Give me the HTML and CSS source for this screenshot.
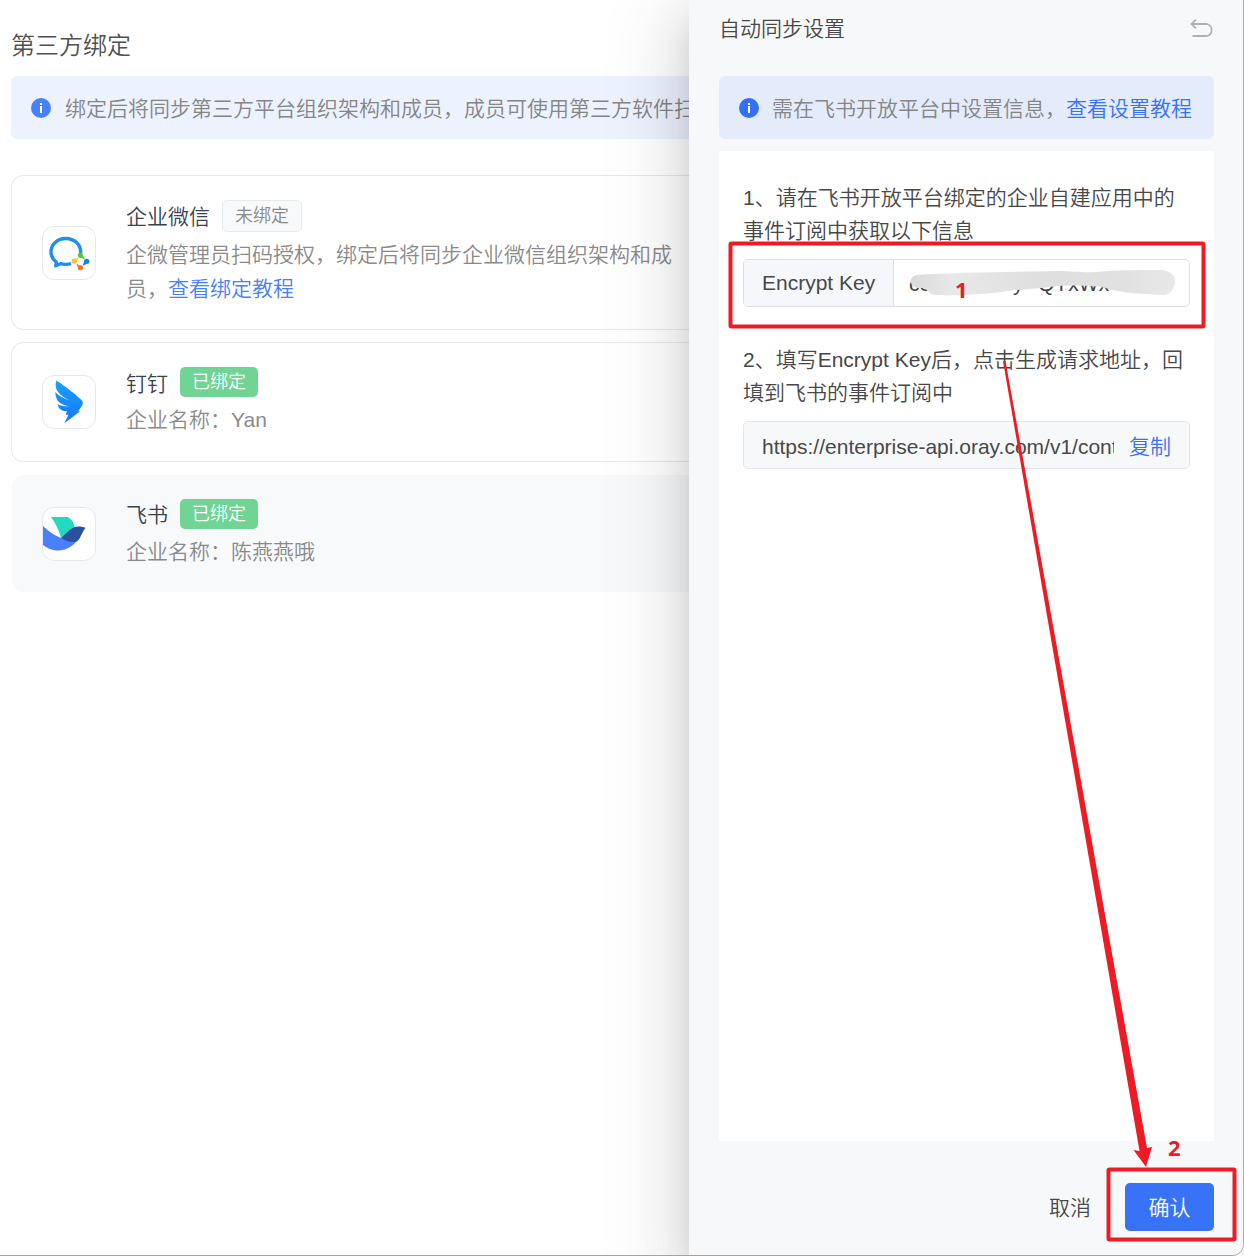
FILE: index.html
```html
<!DOCTYPE html>
<html lang="zh-CN">
<head>
<meta charset="utf-8">
<title>第三方绑定</title>
<link rel="stylesheet" href="styles.css">
</head>
<body>
<div class="app">
  <main class="main">
    <h1 class="page-title">第三方绑定</h1>
    <div class="notice notice-main">
      <svg class="info" viewBox="0 0 20 20"><circle cx="10" cy="10" r="10"/><path d="M9 5h2v2H9zM9 8h2v7H9z"/></svg>
      <span>绑定后将同步第三方平台组织架构和成员，成员可使用第三方软件扫</span>
    </div>
    <section class="card card-wecom">
      <div class="logo">
        <svg viewBox="0 0 54 54">
          <path d="M38.700 26C39 17.500 32.200 11.500 24 11.500C15 11.500 9 17.500 9 25C9 29.500 11 32.500 14.300 35L13.800 38.800L18.500 36.700C22 37.600 25.500 37.600 29 36.700" fill="none" stroke="#1e8ff2" stroke-width="3.400" stroke-linejoin="round"/>
          <g>
            <circle cx="38.300" cy="28.300" r="2.500" fill="#4fca37"/><path d="M39.800 26.300L43 32.400L36.600 30.100Z" fill="#4fca37"/>
            <circle cx="32" cy="34.300" r="2.500" fill="#ffc81e"/><path d="M30 32.800L36.500 30.600L33.800 36.300Z" fill="#ffc81e"/>
            <circle cx="38.500" cy="40.800" r="2.500" fill="#ff6d22"/><path d="M34.300 36.800L40.700 39.600L36.700 42.500Z" fill="#ff6d22"/>
            <circle cx="44.800" cy="34.300" r="2.500" fill="#0c82f0"/><path d="M43.200 32.300L40.400 38.700L46.300 36.300Z" fill="#0c82f0"/>
          </g>
        </svg>
      </div>
      <div class="info-text">
        <div class="name-row"><span class="name">企业微信</span><span class="tag tag-off">未绑定</span></div>
        <p class="desc">企微管理员扫码授权，绑定后将同步企业微信组织架构和成<br>员，<a class="link">查看绑定教程</a></p>
      </div>
    </section>
    <section class="card card-ding">
      <div class="logo">
        <svg viewBox="0 0 54 54">
          <defs><linearGradient id="wing" x1="0" y1="0" x2="0" y2="1"><stop offset="0" stop-color="#18a0fb"/><stop offset="1" stop-color="#1677ff"/></linearGradient></defs>
          <path fill="url(#wing)" d="M14.300 5.800C14.800 5.500 28 14.500 39.500 25C41.300 26.500 41 28.500 40.300 30.300L36.300 36.200H38.200L22.300 48.200L26.500 39.800H23.600L25.200 36.200C19.500 36.600 16.500 33.500 15.600 29.300C18 30.800 21.500 31.300 27 31.300C17.500 29.300 13.600 26 13.300 17C17 21 21.500 23.500 27.500 25.400C17.500 20.500 11.500 14.500 14.300 5.800Z"/>
        </svg>
      </div>
      <div class="info-text">
        <div class="name-row"><span class="name">钉钉</span><span class="tag tag-on">已绑定</span></div>
        <p class="desc">企业名称：Yan</p>
      </div>
    </section>
    <section class="card card-feishu">
      <div class="logo">
        <svg viewBox="0 0 54 54">
          <path fill="#20dbc0" d="M9 10H25.500C29.500 11.500 32 16 33 21L19 31C17.500 23.500 12.500 15 9 10Z"/>
          <path fill="#4a80fc" d="M1 19C9 27 21 34 35 33.500C29 41.500 22 43.500 15 43.500C9.500 43.200 4.500 41 1 38Z"/>
          <path fill="#2b51a3" d="M19 31C25 25.500 29.500 19.500 36.500 19.500C39 19.400 41.500 20 43.600 20.800C39.500 26 38.500 32 35 34.500C29 36 23.500 34 19 31Z"/>
        </svg>
      </div>
      <div class="info-text">
        <div class="name-row"><span class="name">飞书</span><span class="tag tag-on">已绑定</span></div>
        <p class="desc">企业名称：陈燕燕哦</p>
      </div>
    </section>
  </main>

  <aside class="drawer">
    <header class="drawer-head">
      <span>自动同步设置</span>
      <svg class="back" viewBox="0 0 24 20"><path d="M6 .7L1.300 5L6 9.300M1.500 5H17A6.200 6.200 0 0 1 17 17H2.500"/></svg>
    </header>
    <div class="notice notice-drawer">
      <svg class="info" viewBox="0 0 20 20"><circle cx="10" cy="10" r="10"/><path d="M9 5h2v2H9zM9 8h2v7H9z"/></svg>
      <span>需在飞书开放平台中设置信息，<a class="link">查看设置教程</a></span>
    </div>
    <div class="panel">
      <p class="step">1、请在飞书开放平台绑定的企业自建应用中的<br>事件订阅中获取以下信息</p>
      <div class="key-field">
        <div class="key-label">Encrypt Key</div>
        <div class="key-value">
          <svg viewBox="0 0 295 46">
            <defs><linearGradient id="smear" x1="0" y1="0" x2="1" y2="0"><stop offset="0" stop-color="#dadada"/><stop offset=".16" stop-color="#e8e8e8"/><stop offset=".5" stop-color="#dfdfdf"/><stop offset=".8" stop-color="#e1e1e1"/><stop offset="1" stop-color="#e8e8e8"/></linearGradient><filter id="soft"><feGaussianBlur stdDeviation="0.700"/></filter></defs>
            <text x="15" y="30.500" class="key-text">cc</text><text x="119" y="30.500" class="key-text">y</text><text x="144" y="30.500" class="key-text">QYxWx</text>
            <path filter="url(#soft)" fill="url(#smear)" d="M23 15C60 12 120 12 165 11C180 11 188 13 202 12C225 10 245 10 268 10C277 11 282 16 281 23C279 31 276 35 269 35C245 34 222 32 212 28C195 25 175 25 155 27C137 30 120 29 108 32C80 35 55 36 41 35C34 34 35 29 28 28C15 29 13 17 23 15Z"/>
          </svg>
        </div>
      </div>
      <p class="step step-two">2、填写Encrypt Key后，点击生成请求地址，回<br>填到飞书的事件订阅中</p>
      <div class="url-field"><span class="url">https://enterprise-api.oray.com/v1/cont</span><a class="link">复制</a></div>
    </div>
    <footer class="drawer-foot"><span class="cancel">取消</span><button class="confirm">确认</button></footer>
  </aside>

  <svg class="annotations" viewBox="0 0 1244 1256">
    <rect x="730.500" y="243.500" width="473" height="83" rx="1"/>
    <rect x="1108.500" y="1169.500" width="126" height="70" rx="1"/>
    <path d="M1003 361L1005.500 361L1147 1148L1152 1147L1146 1167L1133.500 1150L1139.500 1151Z"/>
    <text x="955" y="298">1</text>
    <text x="1168" y="1156">2</text>
  </svg>
</div>
</body>
</html>
```

FILE: styles.css
```css
* { box-sizing: border-box; }
body {
  margin: 0;
  font: 350 21px/33px "Liberation Sans", "Noto Sans CJK SC", sans-serif;
  color: #484848;
}
h1, p { margin: 0; font-weight: inherit; }
.app {
  position: relative;
  display: flex;
  width: 1244px;
  height: 1256px;
  overflow: hidden;
  background: #fff;
  border-right: 1px solid #b0b1b2;
  border-bottom: 1px solid #a4a4a4;
  border-bottom-right-radius: 12px;
}
.main {
  flex: 0 0 689px;
  padding: 28px 0 0 11px;
  overflow: hidden;
  white-space: nowrap;
}
.page-title { font-size: 24px; line-height: 36px; color: #505050; }
.notice {
  display: flex;
  align-items: center;
  gap: 14px;
  height: 63px;
  padding-left: 20px;
  border-radius: 6px;
  color: #858585;
}
.notice span { padding-top: 1px; }
.notice-main { width: 760px; margin: 12px 0 36px; background: #edf2ff; }
.notice-drawer { margin-bottom: 12px; background: #e4ebfb; gap: 13px; }
.info { flex: none; width: 20px; height: 20px; fill: #4680fa; }
.notice-drawer .info { fill: #3470f7; }
.info path { fill: #fff; }
.link { color: #4680fa; }
.drawer .link { color: #3672f8; }
.card {
  display: flex;
  width: 760px;
  margin-bottom: 12px;
  padding-left: 30px;
  border: 1px solid #e7e8eb;
  border-radius: 12px;
}
.card-wecom { height: 155px; padding-top: 24px; }
.card-ding { height: 120px; padding-top: 24px; }
.card-feishu { width: 759px; height: 117px; margin: 13px 0 0 1px; padding: 23px 0 0 29px; background: #f7f9fb; border-color: #f7f9fb; }
.logo {
  flex: none;
  width: 54px;
  height: 54px;
  margin: 8px 30px 0 0;
  border: 1px solid #e6e7ec;
  border-radius: 12px;
  background: #fff;
  overflow: hidden;
}
.card-wecom .logo { margin-top: 26px; }
.logo svg { display: block; width: 54px; height: 54px; margin: -1px; }
.card-wecom .logo svg { margin: -0.5px -1px; }
.name-row { display: flex; align-items: center; gap: 12px; height: 32px; }
.card-ding .name-row, .card-feishu .name-row { height: 30px; }
.name { padding-top: 1px; color: #39424f; }
.card-ding .name { padding-top: 2px; }
.tag {
  height: 30px;
  padding: 0 12px;
  border-radius: 5px;
  font-size: 18px;
  line-height: 31px;
}
.tag-on { background: #6fd494; color: #fff; }
.tag-off { height: 32px; border: 1px solid #e5e8ed; background: #f7f9fb; color: #8a8a8a; }
.desc { margin-top: 6px; line-height: 34px; color: #8a8a8a; }

.drawer {
  flex: 1;
  display: flex;
  flex-direction: column;
  padding: 0 29px 24px 30px;
  background: #f7f8fa;
  box-shadow: 0 24px 72px 24px rgba(0,0,0,.08), 0 18px 48px rgba(0,0,0,.12), 0 12px 24px -12px rgba(0,0,0,.16);
}
.drawer-head { display: flex; justify-content: space-between; height: 76px; padding-top: 12px; }
.back { width: 24px; height: 20px; margin-top: 7px; fill: none; stroke: #b0b1b3; stroke-width: 1.8; }
.panel { height: 990px; padding: 30px 24px; background: #fff; white-space: nowrap; }
.key-field {
  display: flex;
  height: 48px;
  margin-top: 12px;
  border: 1px solid #dadde6;
  border-radius: 5px;
  overflow: hidden;
}
.key-label { width: 150px; padding-left: 18px; line-height: 46px; background: #f5f7fb; border-right: 1px solid #dadde6; }
.key-value svg { display: block; width: 295px; height: 46px; }
.key-text { fill: #444; font-size: 21px; }
.step-two { margin-top: 36px; }
.url-field {
  display: flex;
  justify-content: space-between;
  height: 48px;
  margin-top: 12px;
  padding: 0 18px;
  border: 1px solid #e3e5e9;
  border-radius: 5px;
  background: #f7f8fa;
  line-height: 50px;
}
.url { width: 352px; overflow: hidden; }
.drawer-foot { display: flex; justify-content: flex-end; align-items: center; gap: 34px; height: 48px; margin-top: 42px; }
.confirm {
  width: 89px;
  height: 48px;
  padding: 0;
  border: 0;
  border-radius: 5px;
  background: #3873f7;
  color: #fff;
  font: inherit;
}
.annotations { position: absolute; left: 0; top: 0; width: 1244px; height: 1256px; pointer-events: none; }
.annotations rect { fill: none; stroke: #ed1c24; stroke-width: 4; }
.annotations path, .annotations text { fill: #ed1c24; }
.annotations text { font: 700 22px "Noto Sans", sans-serif; }
```
